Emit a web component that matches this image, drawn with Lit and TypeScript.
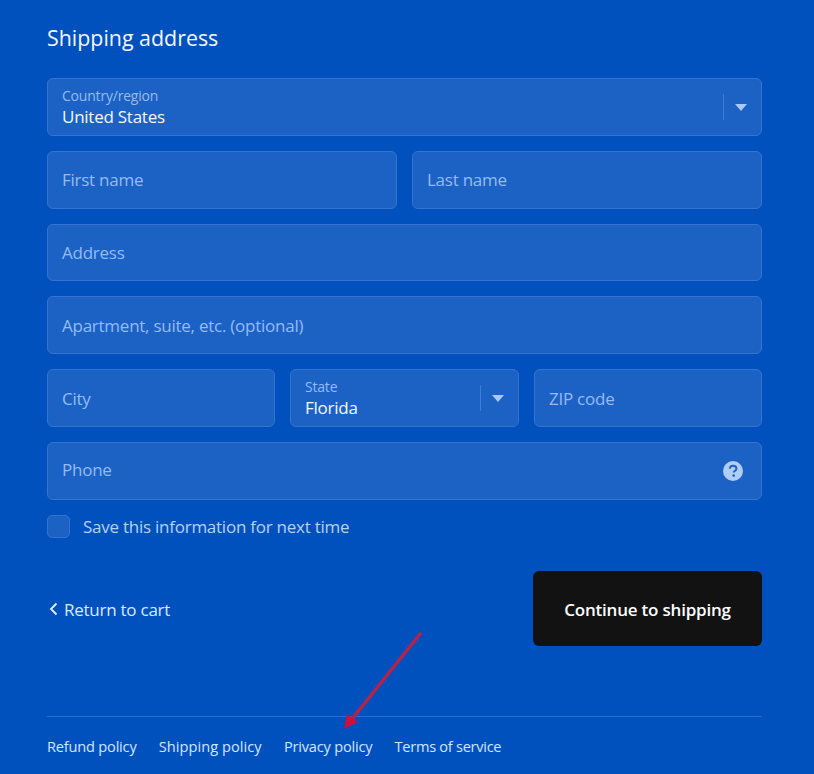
import { LitElement, html, css } from "lit";
import { customElement } from "lit/decorators.js";

@customElement("app-root")
export class AppRoot extends LitElement {
  static styles = css`
    :host {
      display: block;
      position: relative;
      width: 814px;
      height: 774px;
      overflow: hidden;
      background: #0051bd;
      font-family: "Open Sans", "Noto Sans", sans-serif;
      color: #fff;
      box-sizing: border-box;
    }
    .page {
      display: flex;
      flex-direction: column;
      padding: 0 52px 0 47px;
    }
    h2 {
      margin: 0;
      padding-top: 23px;
      height: 78px;
      box-sizing: border-box;
      font-size: 21.4px;
      line-height: 30px;
      font-weight: 400;
      color: #f0f7ff;
    }
    .fields {
      display: grid;
      gap: 15px;
    }
    .row {
      display: grid;
      gap: 15px;
      height: 57.8px;
    }
    .two { grid-template-columns: 1fr 1fr; }
    .three { grid-template-columns: 228px 229px 228px; }
    .field {
      box-sizing: border-box;
      height: 57.8px;
      border: 1px solid #3574ce;
      border-radius: 6px;
      background: #1c62c4;
      padding: 0 14px;
      display: flex;
      align-items: center;
      font-size: 17px;
      color: #94bbf2;
      letter-spacing: -0.25px;
    }
    .stacked {
      flex-direction: column;
      align-items: flex-start;
      justify-content: center;
      padding-top: 3px;
    }
    .select { position: relative; }
    .small {
      font-size: 14px;
      line-height: 17px;
      margin: -2px 0 2px;
      color: #94bbf2;
      letter-spacing: -0.2px;
    }
    .value {
      font-size: 17px;
      line-height: 22px;
      color: #f2f8ff;
      letter-spacing: -0.25px;
    }
    .divider {
      position: absolute;
      right: 37px;
      top: 15px;
      height: 26px;
      width: 1px;
      background: #3f7dd3;
    }
    .caret {
      position: absolute;
      right: 14px;
      top: 25px;
      width: 0;
      height: 0;
      border-left: 6.5px solid transparent;
      border-right: 6.5px solid transparent;
      border-top: 7px solid #a9c9f6;
    }
    .phone { justify-content: space-between; padding-right: 18px; }
    .phone span { margin-bottom: 2px; }
    .help { width: 20px; height: 20px; display: block; }
    .save {
      display: flex;
      align-items: center;
      gap: 13px;
      margin-top: 15px;
      height: 23px;
      font-size: 17px;
      color: #b5d1f8;
      letter-spacing: -0.25px;
    }
    .check {
      box-sizing: border-box;
      width: 23px;
      height: 23px;
      border: 1px solid #3574ce;
      border-radius: 5px;
      background: #1c62c4;
    }
    .actions {
      display: flex;
      justify-content: space-between;
      align-items: center;
      margin-top: 33px;
    }
    .back {
      display: flex;
      align-items: center;
      gap: 5px;
      padding-top: 2px;
      font-size: 17px;
      color: #d9e9ff;
      letter-spacing: -0.25px;
      margin-left: 1px;
    }
    .back svg { width: 11px; height: 14px; display: block; }
    .btn {
      box-sizing: border-box;
      width: 229px;
      height: 75px;
      border: 0;
      border-radius: 6px;
      padding-top: 2px;
      background: #121212;
      color: #fff;
      font: 600 17px "Open Sans", "Noto Sans", sans-serif;
      letter-spacing: -0.2px;
      display: flex;
      align-items: center;
      justify-content: center;
    }
    footer {
      margin-top: 70px;
      border-top: 1px solid #2a6ccb;
      padding-top: 19px;
      display: flex;
      gap: 22.2px;
      font-size: 14.6px;
      line-height: 20px;
      color: #d4e6ff;
      letter-spacing: -0.2px;
    }
    .wide { letter-spacing: 0.05px; }
    .narrow { letter-spacing: -0.28px; }
    .arrow {
      position: absolute;
      left: 0;
      top: 0;
      width: 814px;
      height: 774px;
      pointer-events: none;
    }
  `;

  render() {
    return html`
      <div class="page">
        <h2>Shipping address</h2>
        <div class="fields">
          <div class="field stacked select">
            <span class="small">Country/region</span>
            <span class="value">United States</span>
            <i class="divider"></i><i class="caret"></i>
          </div>
          <div class="row two">
            <div class="field">First name</div>
            <div class="field">Last name</div>
          </div>
          <div class="field">Address</div>
          <div class="field">Apartment, suite, etc. (optional)</div>
          <div class="row three">
            <div class="field">City</div>
            <div class="field stacked select">
              <span class="small">State</span>
              <span class="value">Florida</span>
              <i class="divider"></i><i class="caret"></i>
            </div>
            <div class="field">ZIP code</div>
          </div>
          <div class="field phone">
            <span>Phone</span>
            <svg class="help" viewBox="0 0 20 20">
              <circle cx="10" cy="10" r="10" fill="#b0cdf6"></circle>
              <path d="M6.7 7.6c.2-1.9 1.6-2.9 3.4-2.9 1.9 0 3.3 1.1 3.3 2.8 0 1.2-.6 1.9-1.6 2.5-.8.5-1 .8-1 1.6" fill="none" stroke="#1c62c4" stroke-width="2"></path>
              <circle cx="10.7" cy="14.6" r="1.3" fill="#1c62c4"></circle>
            </svg>
          </div>
        </div>
        <label class="save"><span class="check"></span>Save this information for next time</label>
        <div class="actions">
          <a class="back">
            <svg viewBox="0 0 11 14"><path d="M8.5 1.5 3 7l5.5 5.5" fill="none" stroke="#e6f0ff" stroke-width="1.8"></path></svg>
            Return to cart
          </a>
          <div class="btn">Continue to shipping</div>
        </div>
        <footer>
          <span>Refund policy</span>
          <span class="wide">Shipping policy</span>
          <span>Privacy policy</span>
          <span class="narrow">Terms of service</span>
        </footer>
      </div>
      <svg class="arrow" viewBox="0 0 814 774">
        <line x1="420" y1="634" x2="352" y2="719" stroke="#b2234a" stroke-width="3.6" stroke-linecap="round"></line>
        <polygon points="344,729 347,714 358,722" fill="#cc0f3c"></polygon>
      </svg>
    `;
  }
}
